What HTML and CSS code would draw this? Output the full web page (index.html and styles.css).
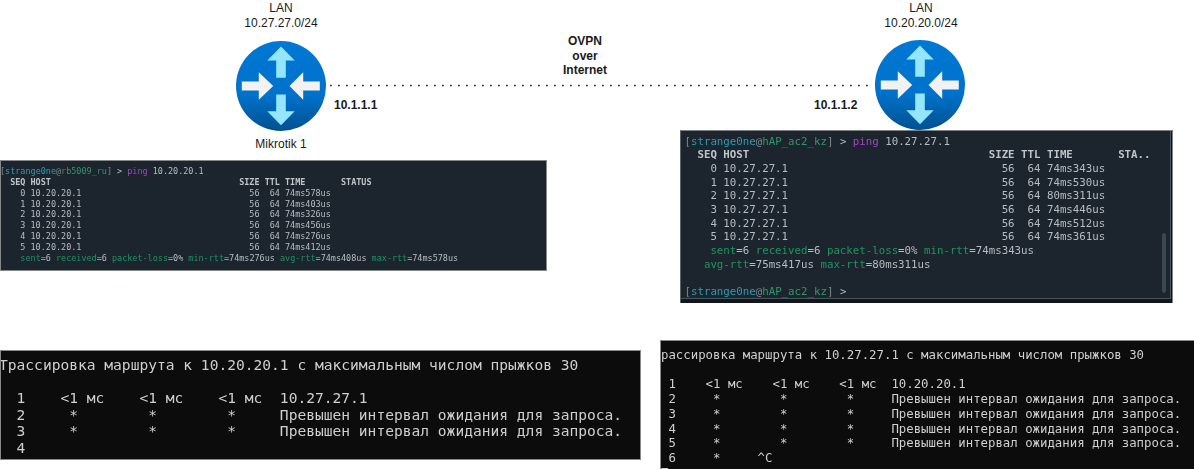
FILE: index.html
```html
<!DOCTYPE html>
<html lang="ru">
<head>
<meta charset="utf-8">
<title>OVPN over Internet</title>
<link rel="stylesheet" href="styles.css">
</head>
<body>
<main class="canvas">
  <div class="label lan lan-a">LAN<br>10.27.27.0/24</div>
  <div class="label lan lan-b">LAN<br>10.20.20.0/24</div>
  <div class="label name-a">Mikrotik 1</div>
  <div class="label bold ip-a">10.1.1.1</div>
  <div class="label bold ip-b">10.1.1.2</div>
  <div class="label bold tunnel">OVPN<br>over<br>Internet</div>

  <svg class="link" width="546" height="3" viewBox="0 0 546 3"><line x1="3" y1="1.5" x2="546" y2="1.5"/></svg>

  <svg class="router router-a" width="92" height="92" viewBox="-46 -46 92 92">
    <defs>
      <linearGradient id="disc" x1="0" y1="0" x2="0" y2="1">
        <stop offset="0" stop-color="#0078d4"/>
        <stop offset="0.6" stop-color="#0072cb"/>
        <stop offset="1" stop-color="#00508f"/>
      </linearGradient>
    </defs>
    <g id="router-art">
      <circle r="45" fill="url(#disc)"/>
      <path class="arrow-v" d="M0-39.5 13.7-25.5H4.8V-8.2H-4.8V-25.5H-13.7Z"/>
      <path class="arrow-v" d="M0 39.2 13.7 25.2H4.8V8.5H-4.8V25.2H-13.7Z"/>
      <path class="arrow-h" d="M-7.8 0-22.2-13.8V-4.5H-39.2V4.5H-22.2V13.8Z"/>
      <path class="arrow-h" d="M8.5 0 22.2-13.8V-4.5H38.8V4.5H22.2V13.8Z"/>
    </g>
  </svg>
  <svg class="router router-b" width="92" height="92" viewBox="-46 -46 92 92">
    <use href="#router-art"/>
  </svg>

  <section class="term mt mt-a">
<pre><span class="br">[</span><span class="us">strange0ne</span><span class="br">@</span><span class="ho">rb5009_ru</span><span class="br">]</span> &gt; <span class="cmd">ping</span> 10.20.20.1
<b>  SEQ HOST                                     SIZE TTL TIME       STATUS</b>
    0 10.20.20.1                                 56  64 74ms578us
    1 10.20.20.1                                 56  64 74ms403us
    2 10.20.20.1                                 56  64 74ms326us
    3 10.20.20.1                                 56  64 74ms456us
    4 10.20.20.1                                 56  64 74ms276us
    5 10.20.20.1                                 56  64 74ms412us
    <i>sent</i>=6 <i>received</i>=6 <i>packet-loss</i>=0% <i>min-rtt</i>=74ms276us <i>avg-rtt</i>=74ms408us <i>max-rtt</i>=74ms578us</pre>
  </section>

  <section class="term mt mt-b">
    <div class="pane">
<pre><span class="br">[</span><span class="us">strange0ne</span><span class="br">@</span><span class="ho">hAP_ac2_kz</span><span class="br">]</span> &gt; <span class="cmd">ping</span> 10.27.27.1
<b>  SEQ HOST                                     SIZE TTL TIME       STA..</b>
    0 10.27.27.1                                 56  64 74ms343us
    1 10.27.27.1                                 56  64 74ms530us
    2 10.27.27.1                                 56  64 80ms311us
    3 10.27.27.1                                 56  64 74ms446us
    4 10.27.27.1                                 56  64 74ms512us
    5 10.27.27.1                                 56  64 74ms361us
    <i>sent</i>=6 <i>received</i>=6 <i>packet-loss</i>=0% <i>min-rtt</i>=74ms343us
   <i>avg-rtt</i>=75ms417us <i>max-rtt</i>=80ms311us

<span class="br">[</span><span class="us">strange0ne</span><span class="br">@</span><span class="ho">hAP_ac2_kz</span><span class="br">]</span> &gt;</pre>
    </div>
    <div class="scrollbar"></div>
  </section>

  <section class="term cmdw cmd-a">
<pre>Трассировка маршрута к 10.20.20.1 с максимальным числом прыжков 30

  1    &lt;1 мс    &lt;1 мс    &lt;1 мс  10.27.27.1
  2     *        *        *     Превышен интервал ожидания для запроса.
  3     *        *        *     Превышен интервал ожидания для запроса.
  4</pre>
  </section>

  <section class="term cmdw cmd-b">
<pre>рассировка маршрута к 10.27.27.1 с максимальным числом прыжков 30

 1    &lt;1 мс    &lt;1 мс    &lt;1 мс  10.20.20.1
 2     *        *        *     Превышен интервал ожидания для запроса.
 3     *        *        *     Превышен интервал ожидания для запроса.
 4     *        *        *     Превышен интервал ожидания для запроса.
 5     *        *        *     Превышен интервал ожидания для запроса.
 6     *     ^C
Трассировка завершена.</pre>
  </section>
</main>
</body>
</html>
```
FILE: styles.css
```css
* { box-sizing: border-box; }
html, body { margin: 0; background: #fff; }

.canvas {
  position: relative;
  width: 1194px;
  height: 469px;
  overflow: hidden;
  background: #fff;
}

.label {
  position: absolute;
  font: 12px/15px "Liberation Sans", Arial, sans-serif;
  color: #1a1a1a;
  text-align: center;
  white-space: nowrap;
}
.bold { font-weight: 700; }

.lan { width: 100px; }
.lan-a { left: 231px; top: 1px; }
.lan-b { left: 871px; top: 1px; }
.name-a { left: 231px; top: 137px; width: 100px; }
.ip-a { left: 334px; top: 98px; }
.ip-b { left: 814px; top: 98px; }
.tunnel { left: 535px; top: 34px; width: 100px; line-height: 14.5px; }

.link { position: absolute; left: 327px; top: 84px; }
.link line {
  stroke: #222;
  stroke-width: 1.7;
  stroke-dasharray: 1.7 6.3;
}

.router { position: absolute; }
.router-a { left: 234.5px; top: 39.5px; }
.router-b { left: 874px; top: 39px; }
.arrow-v { fill: #94e6ff; }
.arrow-h { fill: #f2f2f2; }

.term {
  position: absolute;
  overflow: hidden;
  border: 1px solid #85898c;
}
.term pre { margin: 0; filter: blur(0.2px); }

.mt { background: #1c252d; color: #b6bdc2; }
.mt pre { font-family: "DejaVu Sans Mono", "Liberation Mono", monospace; }
.mt b { font-weight: 700; color: #bfc6ca; }
.mt i { font-style: normal; color: #1f9362; }
.br { color: #7c8891; }
.us { color: #2b9db2; }
.ho { color: #2a9a68; }
.cmd { color: #a544c6; }

.mt-a { left: 0; top: 160px; width: 547px; height: 111px; padding: 5px 0 0 0; }
.mt-a pre { font-size: 8.46px; line-height: 10.85px; margin-left: -1px; }

.mt-b {
  left: 680px;
  top: 130px;
  width: 493px;
  height: 173px;
  background: #10161b;
  border-color: #7d8184;
  border-bottom: 0;
  border-left-color: #5d6368;
}
.pane {
  height: 168px;
  width: 490px;
  padding: 3.5px 0 0 4px;
  background: #1c252d;
  border-right: 1px solid #4b555c;
  border-bottom: 1px solid #4b555c;
}
.mt-b pre { font-size: 10.75px; line-height: 13.67px; margin-left: -0.5px; }

.scrollbar {
  position: absolute;
  left: 481px;
  top: 102px;
  width: 4px;
  height: 60px;
  border-radius: 2px;
  background: #3a4650;
}

.cmdw { background: #0c0c0c; color: #cfcfcf; }
.cmdw pre { font-family: "DejaVu Sans Mono", "Liberation Mono", monospace; }

.cmd-a { left: 0; top: 350px; width: 641px; height: 110px; padding: 6px 0 0 0; }
.cmd-a pre { font-size: 14.58px; line-height: 16.6px; margin-left: -2px; }

.cmd-b { left: 660px; top: 340px; width: 534px; height: 129px; padding: 7px 0 0 0; border-right: 0; border-bottom: 0; }
.cmd-b pre { font-size: 12.35px; line-height: 14.7px; }
```
